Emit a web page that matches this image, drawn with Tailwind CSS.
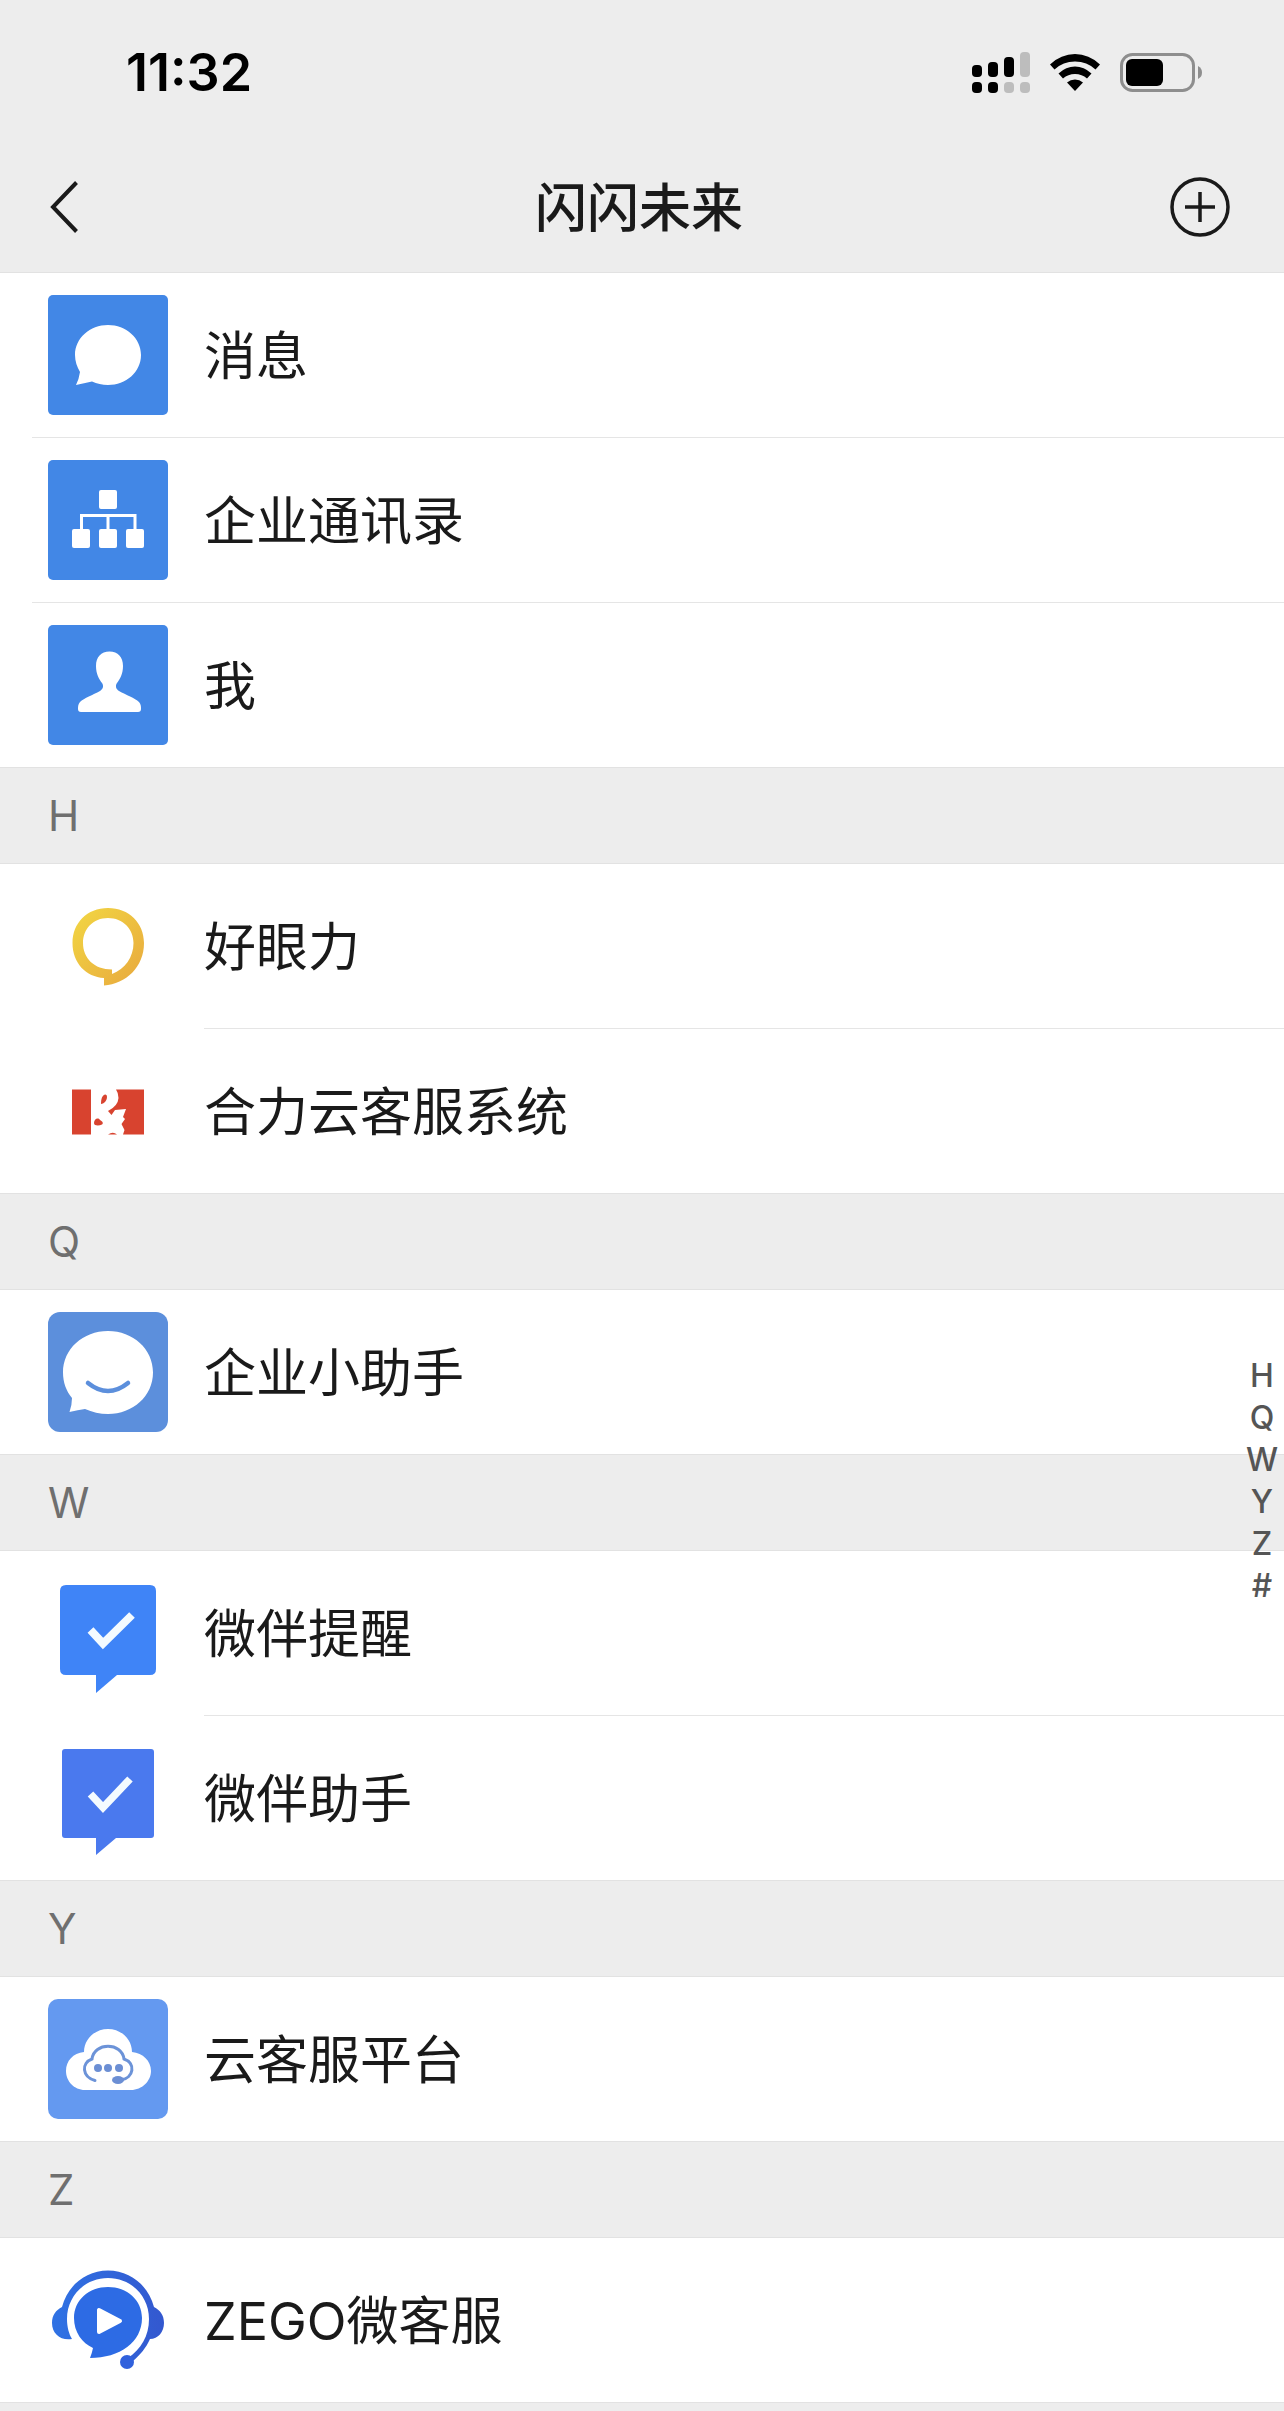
<!DOCTYPE html>
<html lang="zh-CN">
<head>
    <meta charset="UTF-8">
    <meta name="viewport" content="width=device-width, initial-scale=1.0">
    <title>闪闪未来</title>
    <script src="https://cdn.jsdelivr.net/npm/@tailwindcss/browser@4"></script>
</head>
<body class="relative min-h-screen bg-[#ededed] font-[Inter,'Noto_Sans_CJK_SC',sans-serif] text-[#1a1a1a]">
    <header class="border-b border-[#e2e2e2]">
        <!-- 状态栏 -->
        <div class="flex h-[145px] items-center justify-between pl-[126px] pr-[82px] text-black">
            <time class="text-[52px] leading-[60px] font-semibold">11:32</time>
            <div class="flex items-center gap-5">
                <svg class="h-[41px] w-[58px]" viewBox="0 0 58 41" aria-hidden="true">
                    <rect x="0" y="13" width="10" height="12" rx="4"/>
                    <rect x="16" y="10" width="10" height="15" rx="4"/>
                    <rect x="32" y="5" width="10" height="20" rx="4"/>
                    <rect x="48" y="0" width="10" height="25" rx="4" fill="#bdbdbd"/>
                    <rect x="0" y="30" width="10" height="11" rx="4"/>
                    <rect x="16" y="30" width="10" height="11" rx="4"/>
                    <rect x="32" y="30" width="10" height="11" rx="4" fill="#bdbdbd"/>
                    <rect x="48" y="30" width="10" height="11" rx="4" fill="#bdbdbd"/>
                </svg>
                <svg class="h-[37px] w-[50px]" viewBox="0 0 50 37" aria-hidden="true">
                    <path d="M0 10.500Q11 0 25 0T50 10.500L45.500 15.500Q37 7.500 25 7.500T4.500 15.500Z"/>
                    <path d="M8.500 19.500Q16 12.500 25 12.500T41.500 19.500L37 24.500Q32 20 25 20T13 24.500Z"/>
                    <path d="M17 28.500Q20.500 25.500 25 25.500T33 28.500L25 37Z"/>
                </svg>
                <svg class="h-[39px] w-[82px]" viewBox="0 0 82 39" aria-hidden="true">
                    <rect x="1.500" y="1.500" width="72" height="36" rx="11" fill="none" stroke="#8e8e8e" stroke-width="3"/>
                    <rect x="6" y="6" width="37" height="27" rx="6"/>
                    <path d="M78 13Q82 15 82 19.500T78 26Z" fill="#8e8e8e"/>
                </svg>
            </div>
        </div>
        <!-- 导航栏 -->
        <div class="grid h-[127px] grid-cols-3 items-center pb-1 pl-12 pr-[54px]">
            <button type="button" class="justify-self-start" aria-label="返回">
                <svg class="h-[54px] w-8" viewBox="0 0 32 54" fill="none" stroke="#1a1a1a" stroke-width="4">
                    <path d="M28.500 2.500L5 27L28.500 51.500"/>
                </svg>
            </button>
            <h1 class="pt-1 text-center text-[52px] leading-[60px] font-medium">闪闪未来</h1>
            <button type="button" class="justify-self-end" aria-label="添加">
                <svg class="size-[60px]" viewBox="0 0 60 60" fill="none" stroke="#1a1a1a" stroke-width="3.500">
                    <circle cx="30" cy="30" r="28"/>
                    <path d="M30 15V45M15 30H45"/>
                </svg>
            </button>
        </div>
    </header>

    <main class="text-[52px] leading-[60px]">
        <!-- 固定入口 -->
        <ul class="bg-white">
            <li class="ml-8 border-b border-[#e5e5e5]">
                <a href="#" class="flex h-[164px] items-center gap-9 pl-4">
                    <svg class="size-[120px]" viewBox="0 0 120 120">
                        <rect width="120" height="120" rx="5" fill="#4287e6"/>
                        <path d="M60 30C78 30 93 43 93 60S78 90 60 90C54 90 49 88.500 44 86.500Q36 88 28 90Q31 84 32 77C29 72 27 66 27 60C27 43 42 30 60 30Z" fill="#fff"/>
                    </svg>
                    <span class="pt-1">消息</span>
                </a>
            </li>
            <li class="ml-8 border-b border-[#e5e5e5]">
                <a href="#" class="flex h-[164px] items-center gap-9 pl-4">
                    <svg class="size-[120px]" viewBox="0 0 120 120" fill="#fff">
                        <rect width="120" height="120" rx="5" fill="#4287e6"/>
                        <rect x="51" y="30" width="18" height="19" rx="2"/>
                        <rect x="24" y="69" width="18" height="19" rx="2"/>
                        <rect x="51" y="69" width="18" height="19" rx="2"/>
                        <rect x="78" y="69" width="18" height="19" rx="2"/>
                        <path d="M33.500 70V55.500H87V70M60 55.500V70" fill="none" stroke="#fff" stroke-width="3"/>
                    </svg>
                    <span class="pt-1">企业通讯录</span>
                </a>
            </li>
            <li class="ml-8">
                <a href="#" class="flex h-[164px] items-center gap-9 pl-4">
                    <svg class="size-[120px]" viewBox="0 0 120 120">
                        <rect width="120" height="120" rx="5" fill="#4287e6"/>
                        <path d="M61.500 26.500C70 26.500 75 32 75 41C75 49 72 54 69 58C67 61 68 64 71 66C78 70 87 73 91 77C93 79 93 82 93 84Q93 87 90 87H33Q30 87 30 84C30 82 30 79 32 77C36 73 45 70 52 66C55 64 56 61 54 58C51 54 48 49 48 41C48 32 53 26.500 61.500 26.500Z" fill="#fff"/>
                    </svg>
                    <span class="pt-1">我</span>
                </a>
            </li>
        </ul>

        <section id="H">
            <h2 class="flex h-[97px] items-center border-y border-[#e2e2e2] pl-12 text-[42px] text-[#6f6f6f]">H</h2>
            <ul class="bg-white">
                <li>
                    <a href="#" class="flex h-[165px] items-center gap-9 pl-12">
                        <svg class="size-[120px]" viewBox="0 0 120 120">
                            <defs>
                                <linearGradient id="gold" x1="0" y1="0" x2="1" y2="1">
                                    <stop offset="0" stop-color="#f2d743"/>
                                    <stop offset="1" stop-color="#e8a83e"/>
                                </linearGradient>
                            </defs>
                            <path fill="url(#gold)" fill-rule="evenodd" d="M60 21C81 21 96 36 96 56C96 80 78 97 56 98.500V91C38 90 24.500 76 24.500 56C24.500 36 39 21 60 21ZM60 31C45 31 35 42 35 56C35 71 46 82.500 64 82.500V87C77 82 85.500 70 85.500 56C85.500 42 75 31 60 31Z"/>
                        </svg>
                        <span class="flex flex-1 items-center self-stretch border-b border-[#e5e5e5] pt-1">好眼力</span>
                    </a>
                </li>
                <li>
                    <a href="#" class="flex h-[164px] items-center gap-9 pl-12">
                        <svg class="size-[120px]" viewBox="0 0 120 120" fill="#d8432f">
                            <path d="M24 38.500H43V83.500H24Z"/>
                            <path d="M68 38.500H96V83.500H75L76.500 79L73.500 73L77 68L75 66L78 58L67 59L63.500 64L60 60Q70 55 70.500 47Q70.500 42 68 38.500Z"/>
                            <path d="M53 53C53 48 54 44 57.500 43.500C60 44 59 49 57 51Q55 53 53 53Z"/>
                            <path d="M46 72C46 68 50 66 52 69C54 70 56 72 54 73.500C51 75 46 75 46 72Z"/>
                            <path d="M60 83.500Q65 80 69 83.500Z"/>
                        </svg>
                        <span class="pt-1">合力云客服系统</span>
                    </a>
                </li>
            </ul>
        </section>

        <section id="Q">
            <h2 class="flex h-[97px] items-center border-y border-[#e2e2e2] pl-12 text-[42px] text-[#6f6f6f]">Q</h2>
            <ul class="bg-white">
                <li>
                    <a href="#" class="flex h-[164px] items-center gap-9 pl-12">
                        <svg class="size-[120px]" viewBox="0 0 120 120">
                            <rect width="120" height="120" rx="12" fill="#5c8fdc"/>
                            <path d="M60 19C85 19 105 37 105 60.500S85 102 60 102C52 102 44 100 37 97Q30 98 21.500 100Q24 93 24 86C18 79 15 70 15 60.500C15 37 35 19 60 19Z" fill="#fff"/>
                            <path d="M40 71Q60 87 80 71" fill="none" stroke="#5c8fdc" stroke-width="4.500" stroke-linecap="round"/>
                        </svg>
                        <span class="pt-1">企业小助手</span>
                    </a>
                </li>
            </ul>
        </section>

        <section id="W">
            <h2 class="flex h-[97px] items-center border-y border-[#e2e2e2] pl-12 text-[42px] text-[#6f6f6f]">W</h2>
            <ul class="bg-white">
                <li>
                    <a href="#" class="flex h-[165px] items-center gap-9 pl-12">
                        <svg class="size-[120px]" viewBox="0 0 120 120">
                            <path d="M18 11H102Q108 11 108 17V95Q108 101 102 101H69L48 119V101H18Q12 101 12 95V17Q12 11 18 11Z" fill="#3f84f7"/>
                            <path d="M42.500 56L55 69.500L84 41" fill="none" stroke="#f4fbff" stroke-width="8"/>
                        </svg>
                        <span class="flex flex-1 items-center self-stretch border-b border-[#e5e5e5] pt-1">微伴提醒</span>
                    </a>
                </li>
                <li>
                    <a href="#" class="flex h-[164px] items-center gap-9 pl-12">
                        <svg class="size-[120px]" viewBox="0 0 120 120">
                            <path d="M17 11H103Q106 11 106 14V97Q106 100 103 100H68L48 117V100H17Q14 100 14 97V14Q14 11 17 11Z" fill="#4a79ee"/>
                            <path d="M42.500 56L55 69.500L82 41" fill="none" stroke="#f4fbff" stroke-width="7.500"/>
                        </svg>
                        <span class="pt-1">微伴助手</span>
                    </a>
                </li>
            </ul>
        </section>

        <section id="Y">
            <h2 class="flex h-[97px] items-center border-y border-[#e2e2e2] pl-12 text-[42px] text-[#6f6f6f]">Y</h2>
            <ul class="bg-white">
                <li>
                    <a href="#" class="flex h-[164px] items-center gap-9 pl-12">
                        <svg class="size-[120px]" viewBox="0 0 120 120">
                            <rect width="120" height="120" rx="10" fill="#6499f0"/>
                            <path d="M36 53C36 40 47 30 60 30S84 40 84 53C95 54 103 62 103 72S94 91 83 91H37C26 91 18 82 18 72S25 54 36 53Z" fill="#fff"/>
                            <path d="M47 81.500C34 78 33 64 44 60C46 43 74 43 76 60C88 64 86 79 73 81" fill="none" stroke="#6c93d8" stroke-width="3" stroke-linecap="round"/>
                            <g fill="#6c8fd4">
                                <circle cx="50" cy="69" r="4"/>
                                <circle cx="60" cy="69" r="4"/>
                                <circle cx="71" cy="69" r="4"/>
                                <ellipse cx="70" cy="81" rx="6" ry="4"/>
                            </g>
                        </svg>
                        <span class="pt-1">云客服平台</span>
                    </a>
                </li>
            </ul>
        </section>

        <section id="Z">
            <h2 class="flex h-[97px] items-center border-y border-[#e2e2e2] pl-12 text-[42px] text-[#6f6f6f]">Z</h2>
            <ul class="border-b border-[#e2e2e2] bg-white">
                <li>
                    <a href="#" class="flex h-[164px] items-center gap-9 pl-12">
                        <svg class="size-[120px]" viewBox="0 0 120 120">
                            <defs>
                                <linearGradient id="band" x1="0" y1="0" x2="1" y2="0">
                                    <stop offset="0" stop-color="#2f72e4"/>
                                    <stop offset="1" stop-color="#3358cf"/>
                                </linearGradient>
                            </defs>
                            <!-- 耳机 -->
                            <path d="M24 79C13 81 4 74 4 63C4 55 8 50 14 47C20 25 38 10.500 60 10.500S100 25 106 47C112 50 116 55 116 63C116 72 110 79 102 79C98 88 92 95 85 101L80 98C93 89 101 76 101 59C101 36 83 18 60 18S19 36 19 59C19 67 21 74 24 79Z" fill="url(#band)"/>
                            <circle cx="79" cy="102" r="7" fill="#3161dc"/>
                            <!-- 气泡 -->
                            <path d="M60 27C79 27 94 40 94 58C94 82 72 98 42 98Q44 93 45 88C34 83 26 72 26 58C26 40 41 27 60 27Z" fill="#2d6be4"/>
                            <path d="M51 50V72L72 61Z" fill="#fff" stroke="#fff" stroke-width="4" stroke-linejoin="round"/>
                        </svg>
                        <span class="pt-1">ZEGO微客服</span>
                    </a>
                </li>
            </ul>
        </section>
    </main>

    <!-- 字母索引 -->
    <nav class="absolute top-[1355px] right-1 flex w-9 flex-col text-center text-[32px] leading-[42px] font-medium text-[#555]" aria-label="字母索引">
        <a href="#H">H</a>
        <a href="#Q">Q</a>
        <a href="#W">W</a>
        <a href="#Y">Y</a>
        <a href="#Z">Z</a>
        <a href="#">#</a>
    </nav>
</body>
</html>
